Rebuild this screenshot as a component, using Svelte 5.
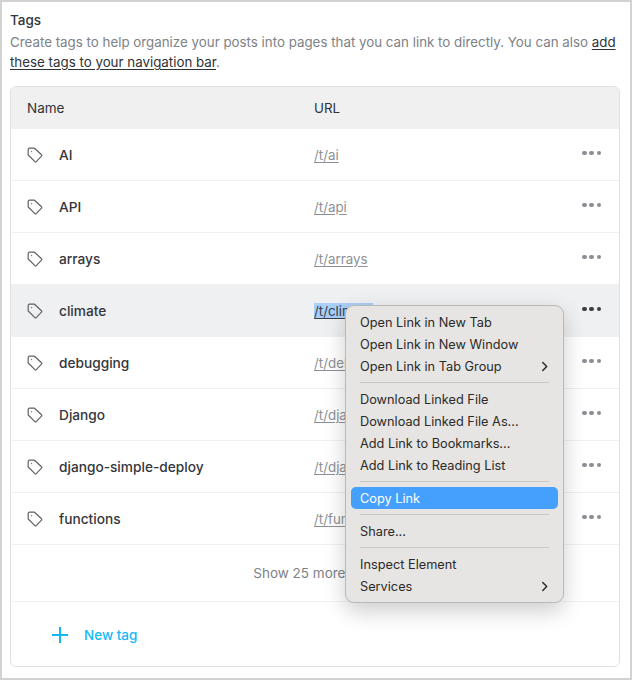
<script>
  const tags = [
    ['AI', '/t/ai'], ['API', '/t/api'], ['arrays', '/t/arrays'], ['climate', '/t/climate'],
    ['debugging', '/t/debugging'], ['Django', '/t/django'], ['django-simple-deploy', '/t/django-simple-deploy'], ['functions', '/t/functions']
  ];
  const menu = [
    [['Open Link in New Tab'], ['Open Link in New Window'], ['Open Link in Tab Group', true]],
    [['Download Linked File'], ['Download Linked File As...'], ['Add Link to Bookmarks...'], ['Add Link to Reading List']],
    [['Copy Link', false, true]],
    [['Share...']],
    [['Inspect Element'], ['Services', true]]
  ];
</script>

<div class="page">
  <h1>Tags</h1>
  <p class="desc">Create tags to help organize your posts into pages that you can link to directly. You can also <a href="#nav">add these tags to your navigation bar</a>.</p>
  <div class="card">
    <div class="row head"><span class="name">Name</span><span class="url">URL</span></div>
    {#each tags as [name, url], i}
      <div class="row" class:active={i === 3}>
        <span class="name tag">
          <svg viewBox="0 0 16 16" width="16" height="16" fill="none" stroke="#5f6266" stroke-width="1.2" stroke-linejoin="round">
            <path d="M1.2 2.4a1.2 1.2 0 0 1 1.2-1.2h5.1l7 6.6a1 1 0 0 1 0 1.4l-5.2 5.4a1 1 0 0 1-1.4 0L1.2 8z" />
            <circle cx="4.6" cy="4.6" r="0.7" fill="#5f6266" stroke="none" />
          </svg>
          <b>{name}</b>
        </span>
        <span class="url"><a href="#t" class:sel={i === 3}>{url}</a></span>
        <span class="dots"><i></i><i></i><i></i></span>
      </div>
    {/each}
    <div class="more">Show 25 more tags</div>
    <div class="new">
      <svg viewBox="0 0 18 18" width="18" height="18" stroke="#14b8f5" stroke-width="2"><path d="M9 1v16M1 9h16" /></svg>
      <span>New tag</span>
    </div>
  </div>

  <div class="menu">
    {#each menu as group, g}
      {#if g > 0}<hr />{/if}
      {#each group as [label, sub, hot]}
        <div class="item" class:hot>
          <span>{label}</span>
          {#if sub}
            <svg viewBox="0 0 8 12" width="7" height="11" fill="none" stroke="#2b2a28" stroke-width="1.7" stroke-linecap="round" stroke-linejoin="round"><path d="M2 1.5 6.5 6 2 10.5" /></svg>
          {/if}
        </div>
      {/each}
    {/each}
  </div>
</div>

<style>
  :global(body) {
    margin: 0;
    background: #fff;
  }
  .page {
    position: relative;
    box-sizing: border-box;
    width: 632px;
    height: 680px;
    border: 2px solid #d2d2d2;
    padding: 10px 8px 0;
    overflow: hidden;
    font-family: Inter, "Liberation Sans", sans-serif;
    color: #2f3237;
  }
  h1 {
    margin: 0;
    font-size: 13.5px;
    line-height: 17px;
    font-weight: 500;
    color: #33363b;
  }
  .desc {
    margin: 3px 0 0;
    width: 610px;
    font-size: 13.33px;
    line-height: 20px;
    color: #7d8287;
  }
  .desc a {
    color: #2f3237;
    text-decoration: underline;
    text-underline-offset: 2px;
  }
  .card {
    box-sizing: border-box;
    margin-top: 14px;
    width: 610px;
    height: 581px;
    border: 1px solid #dfe0e1;
    border-radius: 6px;
    overflow: hidden;
  }
  .row {
    display: flex;
    align-items: center;
    height: 52px;
    border-bottom: 1px solid #f0f1f2;
    box-sizing: border-box;
  }
  .row.head {
    height: 42px;
    background: #f0f0f0;
    border-bottom: 0;
    font-size: 13.5px;
    color: #2f3237;
  }
  .row.active {
    background: #eff0f2;
  }
  .name {
    width: 303px;
    box-sizing: border-box;
    padding-left: 16px;
  }
  .tag {
    display: flex;
    align-items: center;
    gap: 16px;
  }
  .tag b {
    font-size: 13.7px;
    font-weight: 500;
    color: #33363b;
  }
  .url {
    flex: 1;
    font-size: 13.33px;
  }
  .url a {
    color: #8d9196;
    text-decoration: underline;
    text-underline-offset: 2px;
  }
  .url a.sel {
    background: #a8d0fa;
    color: #3a4046;
  }
  .dots {
    display: flex;
    gap: 2.8px;
    margin-right: 18px;
    margin-top: -3px;
  }
  .dots i {
    width: 4.4px;
    height: 4.4px;
    border-radius: 50%;
    background: #8b8f94;
  }
  .active .dots i {
    background: #3a3d42;
  }
  .more {
    height: 57px;
    box-sizing: border-box;
    display: flex;
    align-items: center;
    justify-content: center;
    border-bottom: 1px solid #f0f1f2;
    font-size: 13.5px;
    color: #7d8287;
  }
  .new {
    display: flex;
    align-items: center;
    gap: 15px;
    height: 65px;
    padding: 0 0 0 40px;
    color: #14b8f5;
    font-size: 13.5px;
    font-weight: 500;
  }
  .menu {
    position: absolute;
    left: 343px;
    top: 303px;
    width: 219px;
    height: 298px;
    box-sizing: border-box;
    padding: 5px 5px;
    background: #e6e5e3;
    border: 1px solid #b9b8b6;
    border-radius: 9px;
    box-shadow: 0 8px 22px rgba(0, 0, 0, 0.2);
    font-size: 12.75px;
    color: #2b2a28;
  }
  .item {
    display: flex;
    align-items: center;
    justify-content: space-between;
    height: 22px;
    padding: 0 10px 0 9px;
    border-radius: 5px;
  }
  .item.hot {
    background: #459ffd;
    color: #fff;
  }
  hr {
    border: 0;
    border-top: 1px solid #c9c8c6;
    margin: 5px 9px 5px 9px;
  }
</style>
